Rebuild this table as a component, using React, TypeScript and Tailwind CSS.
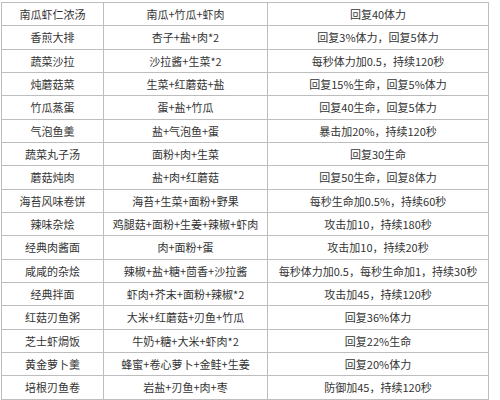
import React from 'react';

const rows: [string, string, string][] = [
  ['南瓜虾仁浓汤', '南瓜+竹瓜+虾肉', '回复40体力'],
  ['香煎大排', '杏子+盐+肉*2', '回复3%体力，回复5体力'],
  ['蔬菜沙拉', '沙拉酱+生菜*2', '每秒体力加0.5，持续120秒'],
  ['炖蘑菇菜', '生菜+红蘑菇+盐', '回复15%生命，回复5%体力'],
  ['竹瓜蒸蛋', '蛋+盐+竹瓜', '回复40生命，回复5体力'],
  ['气泡鱼羹', '盐+气泡鱼+蛋', '暴击加20%，持续120秒'],
  ['蔬菜丸子汤', '面粉+肉+生菜', '回复30生命'],
  ['蘑菇炖肉', '盐+肉+红蘑菇', '回复50生命，回复8体力'],
  ['海苔风味卷饼', '海苔+生菜+面粉+野果', '每秒生命加0.5%，持续60秒'],
  ['辣味杂烩', '鸡腿菇+面粉+生姜+辣椒+虾肉', '攻击加10，持续180秒'],
  ['经典肉酱面', '肉+面粉+蛋', '攻击加10，持续20秒'],
  ['咸咸的杂烩', '辣椒+盐+糖+茴香+沙拉酱', '每秒体力加0.5，每秒生命加1，持续30秒'],
  ['经典拌面', '虾肉+芥末+面粉+辣椒*2', '攻击加45，持续120秒'],
  ['红菇刃鱼粥', '大米+红蘑菇+刃鱼+竹瓜', '回复36%体力'],
  ['芝士虾焗饭', '牛奶+糖+大米+虾肉*2', '回复22%生命'],
  ['黄金萝卜羹', '蜂蜜+卷心萝卜+金鲑+生姜', '回复20%体力'],
  ['培根刃鱼卷', '岩盐+刃鱼+肉+枣', '防御加45，持续120秒'],
];

const App = () => {
  return (
    <div className="w-[500px] h-[400px] bg-white overflow-hidden pt-[2px] pl-[1px] font-['Noto_Sans_CJK_SC','Noto_Sans',sans-serif] text-[11px] text-[#333]">
      <div className="w-[488px] border-t border-l border-[#bdbdbd]">
        {rows.map(([name, recipe, effect]) => (
          <div
            key={name}
            className="grid grid-cols-[102px_164px_221px] h-[23.33px] border-b border-[#bdbdbd]"
          >
            <div className="flex items-center justify-center border-r border-[#bdbdbd] whitespace-nowrap">
              {name}
            </div>
            <div className="flex items-center justify-center border-r border-[#bdbdbd] whitespace-nowrap">
              {recipe}
            </div>
            <div className="flex items-center justify-center border-r border-[#bdbdbd] whitespace-nowrap">
              {effect}
            </div>
          </div>
        ))}
      </div>
    </div>
  );
};

export default App;
